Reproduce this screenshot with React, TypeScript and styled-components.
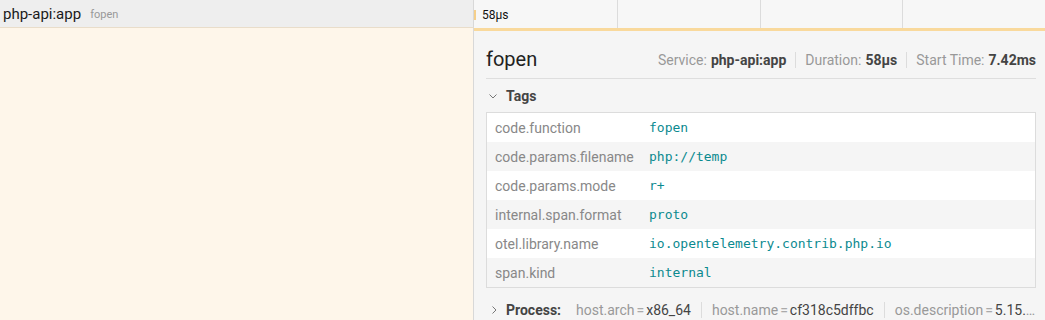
import React from "react";
import styled, { createGlobalStyle } from "styled-components";

const GlobalStyle = createGlobalStyle`
  html, body {
    margin: 0;
    padding: 0;
    background: #fff;
  }
  body {
    font-family: Roboto, "Liberation Sans", sans-serif;
    color: #333;
  }
`;

const Page = styled.div`
  width: 1045px;
  height: 320px;
  display: flex;
  flex-direction: column;
  overflow: hidden;
`;

const SpanRow = styled.div`
  display: flex;
  height: 28px;
`;

const NameCell = styled.div`
  width: 474px;
  flex: none;
  box-sizing: border-box;
  border-right: 1px solid #d8d8d8;
  border-bottom: 1px solid #e9ddca;
  background: #eeeeee;
  display: flex;
  align-items: center;
  padding-left: 3px;
  gap: 9px;
  white-space: nowrap;
`;

const ServiceName = styled.span`
  font-size: 15px;
  color: #1a1a1a;
`;

const OpName = styled.span`
  font-size: 11px;
  color: #999;
  padding-top: 2px;
`;

const ViewCell = styled.div`
  flex: 1;
  position: relative;
  background: #f7f7f7;
  display: flex;
  align-items: center;
`;

const Tick = styled.div<{ $at: number }>`
  position: absolute;
  top: 0;
  bottom: 0;
  left: ${(p) => p.$at}%;
  width: 1px;
  background: #dcdcdc;
`;

const SpanBar = styled.div`
  width: 2px;
  height: 10px;
  margin-top: 1px;
  background: #f5cf8a;
  flex: none;
`;

const SpanLabel = styled.span`
  font-size: 12px;
  color: #111;
  margin-left: 6px;
  padding-top: 2px;
`;

const DetailRow = styled.div`
  display: flex;
  flex: 1;
  min-height: 0;
`;

const Accent = styled.div`
  width: 474px;
  flex: none;
  box-sizing: border-box;
  background: #fef6ea;
  border-right: 1px solid #d8d8d8;
`;

const DetailInfo = styled.div`
  flex: 1;
  min-width: 0;
  background: #f5f5f5;
  border-top: 3px solid #f9d99c;
  padding: 12px 9px 0 12px;
  display: flex;
  flex-direction: column;
`;

const TitleRow = styled.div`
  display: flex;
  align-items: center;
  justify-content: space-between;
  height: 35px;
  border-bottom: 1px solid #dedede;
`;

const Title = styled.h2`
  margin: 0;
  font-size: 20px;
  font-weight: 400;
  color: #222;
  padding-bottom: 2px;
`;

const LabeledList = styled.div`
  display: flex;
  align-items: center;
  font-size: 14px;
  padding-bottom: 1px;
`;

const LabeledItem = styled.div<{ $first?: boolean }>`
  display: flex;
  align-items: center;
  white-space: nowrap;
  ${(p) =>
    !p.$first &&
    `
    border-left: 1px solid #dcdcdc;
    margin-left: 9px;
    padding-left: 9px;
  `}
`;

const Label = styled.span`
  color: #999;
  margin-right: 4px;
`;

const Value = styled.strong`
  color: #444;
  font-weight: 700;
`;

const SectionHeader = styled.div`
  display: flex;
  align-items: center;
  height: 20px;
  margin-top: 8px;
  margin-bottom: 6px;
  padding-left: 3px;
  gap: 9px;
`;

const SectionTitle = styled.span`
  font-size: 14px;
  font-weight: 700;
  color: #444;
`;

const Chevron = styled.svg`
  width: 8px;
  height: 8px;
  flex: none;
  fill: none;
  stroke: #777;
  stroke-width: 1;
`;

const Table = styled.div`
  border: 1px solid #dcdcdc;
  display: flex;
  flex-direction: column;
`;

const TableRow = styled.div<{ $odd: boolean }>`
  display: flex;
  align-items: center;
  height: 29px;
  background: ${(p) => (p.$odd ? "#f5f5f5" : "#ffffff")};
`;

const KeyCell = styled.div`
  width: 154px;
  flex: none;
  padding-left: 8px;
  font-size: 14px;
  color: #888;
  white-space: nowrap;
`;

const ValueCell = styled.div`
  font-family: "DejaVu Sans Mono", monospace;
  font-size: 13px;
  color: #0b8a8f;
  white-space: nowrap;
`;

const ProcessRow = styled.div`
  display: flex;
  align-items: center;
  height: 20px;
  margin-top: 12px;
  padding-left: 4px;
  gap: 8px;
  font-size: 14px;
  white-space: nowrap;
  overflow: hidden;
  min-width: 0;
`;

const ProcessList = styled.div`
  display: flex;
  align-items: center;
  min-width: 0;
  overflow: hidden;
  margin-left: 7px;
`;

const ProcessItem = styled.span<{ $first?: boolean; $last?: boolean }>`
  color: #999;
  ${(p) =>
    !p.$first &&
    `
    border-left: 1px solid #dcdcdc;
    margin-left: 10px;
    padding-left: 10px;
  `}
  ${(p) =>
    p.$last &&
    `
    overflow: hidden;
    text-overflow: ellipsis;
    min-width: 0;
  `}
`;

const Eq = styled.span`
  color: #aaa;
  margin: 0 2px;
`;

const ProcessValue = styled.span`
  color: #444;
`;

const tags: [string, string][] = [
  ["code.function", "fopen"],
  ["code.params.filename", "php://temp"],
  ["code.params.mode", "r+"],
  ["internal.span.format", "proto"],
  ["otel.library.name", "io.opentelemetry.contrib.php.io"],
  ["span.kind", "internal"],
];

const process: [string, string][] = [
  ["host.arch", "x86_64"],
  ["host.name", "cf318c5dffbc"],
  ["os.description", "5.15.0-1034-azure"],
];

const ChevronDown = () => (
  <Chevron viewBox="0 0 8 8">
    <path d="M0.5 2.5 L4 6 L7.5 2.5" />
  </Chevron>
);

const ChevronRight = () => (
  <Chevron viewBox="0 0 8 8">
    <path d="M2.5 0.5 L6 4 L2.5 7.5" />
  </Chevron>
);

export default function App() {
  return (
    <Page>
      <GlobalStyle />
      <SpanRow>
        <NameCell>
          <ServiceName>php-api:app</ServiceName>
          <OpName>fopen</OpName>
        </NameCell>
        <ViewCell>
          <Tick $at={25} />
          <Tick $at={50} />
          <Tick $at={75} />
          <SpanBar />
          <SpanLabel>58µs</SpanLabel>
        </ViewCell>
      </SpanRow>
      <DetailRow>
        <Accent />
        <DetailInfo>
          <TitleRow>
            <Title>fopen</Title>
            <LabeledList>
              <LabeledItem $first>
                <Label>Service:</Label>
                <Value>php-api:app</Value>
              </LabeledItem>
              <LabeledItem>
                <Label>Duration:</Label>
                <Value>58µs</Value>
              </LabeledItem>
              <LabeledItem>
                <Label>Start Time:</Label>
                <Value>7.42ms</Value>
              </LabeledItem>
            </LabeledList>
          </TitleRow>
          <SectionHeader>
            <ChevronDown />
            <SectionTitle>Tags</SectionTitle>
          </SectionHeader>
          <Table>
            {tags.map(([k, v], i) => (
              <TableRow key={k} $odd={i % 2 === 1}>
                <KeyCell>{k}</KeyCell>
                <ValueCell>{v}</ValueCell>
              </TableRow>
            ))}
          </Table>
          <ProcessRow>
            <ChevronRight />
            <SectionTitle>Process:</SectionTitle>
            <ProcessList>
              {process.map(([k, v], i) => (
                <ProcessItem key={k} $first={i === 0} $last={i === process.length - 1}>
                  {k}
                  <Eq>=</Eq>
                  <ProcessValue>{v}</ProcessValue>
                </ProcessItem>
              ))}
            </ProcessList>
          </ProcessRow>
        </DetailInfo>
      </DetailRow>
    </Page>
  );
}
